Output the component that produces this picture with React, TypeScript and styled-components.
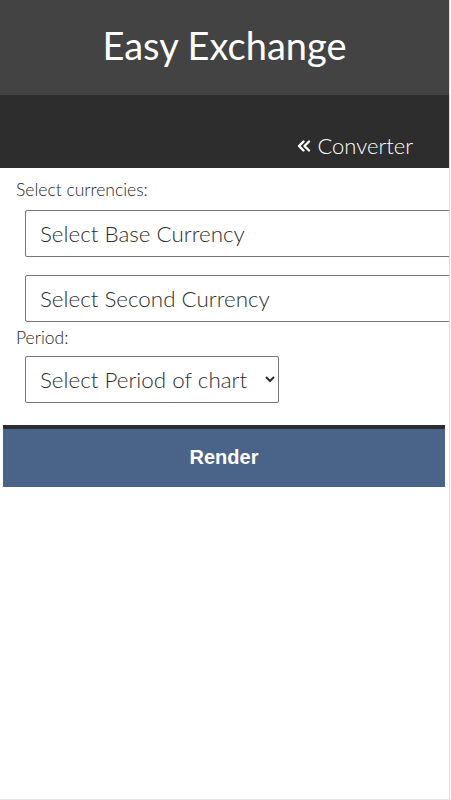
import React from "react";
import styled, { createGlobalStyle } from "styled-components";

const Global = createGlobalStyle`
  html, body { margin: 0; padding: 0; background: #fff; }
  body { overflow: hidden; font-family: "Lato", "Liberation Sans", sans-serif; }
`;

const Page = styled.div`
  width: 449px;
  height: 799px;
  border-right: 1px solid #dcdcdc;
  border-bottom: 1px solid #e4e4e4;
  overflow: hidden;
  display: flex;
  flex-direction: column;
`;

const Header = styled.header`
  height: 95px;
  background: #434343;
  display: flex;
  align-items: center;
  justify-content: center;
`;

const Title = styled.h1`
  margin: 0;
  color: #fff;
  font-family: "Lato", sans-serif;
  font-weight: 400;
  font-size: 38px;
  padding-bottom: 6px;
`;

const Nav = styled.nav`
  height: 73px;
  background: #2d2d2d;
  display: flex;
  align-items: flex-end;
  justify-content: flex-end;
  padding-right: 36px;
  padding-bottom: 9px;
  box-sizing: border-box;
`;

const NavLink = styled.a`
  color: #fff;
  font-family: "Lato", sans-serif;
  font-weight: 300;
  font-size: 22px;
  display: flex;
  align-items: center;
  gap: 6px;
  text-decoration: none;
`;

const Form = styled.form`
  display: flex;
  flex-direction: column;
  padding-top: 12px;
`;

const Label = styled.label`
  font-family: "Lato", sans-serif;
  font-weight: 300;
  color: #1e1e1e;
  font-size: 17.5px;
  margin-left: 16px;
  line-height: 20px;
`;

const Select = styled.select<{ $wide?: boolean }>`
  font-family: "Lato", sans-serif;
  font-weight: 300;
  font-size: 22.4px;
  color: #2e2e2e;
  background: #fff;
  border: 1px solid #767676;
  border-radius: 2px;
  height: 47px;
  padding: 0 8px 0 10px;
  margin-left: 25px;
  width: ${(p) => (p.$wide ? "460px" : "254px")};
  box-sizing: border-box;
`;

const Group = styled.div`
  display: flex;
  flex-direction: column;
  gap: 18px;
  margin-top: 10px;
  margin-bottom: 6px;
`;

const PeriodSelect = styled(Select)`
  margin-top: 8px;
`;

const RenderButton = styled.button`
  margin: 22px 0 0 3px;
  width: 442px;
  height: 62px;
  border: none;
  border-top: 4px solid #2d2d2d;
  background: #4a6388;
  color: #fff;
  font-family: "Liberation Sans", Arial, sans-serif;
  font-weight: 700;
  font-size: 20px;
  padding: 0 0 2px;
`;

export default function App() {
  return (
    <>
      <Global />
      <Page>
        <Header>
          <Title>Easy Exchange</Title>
        </Header>
        <Nav>
          <NavLink href="#">
            <svg width="14" height="14" viewBox="0 0 14 14" fill="none" stroke="#fff" strokeWidth="2.4" strokeLinecap="round" strokeLinejoin="round">
              <path d="M6.5 2.5 L2 7 L6.5 11.5" />
              <path d="M12 2.5 L7.5 7 L12 11.5" />
            </svg>
            Converter
          </NavLink>
        </Nav>
        <Form onSubmit={(e) => e.preventDefault()}>
          <Label>Select currencies:</Label>
          <Group>
            <Select $wide defaultValue="">
              <option value="">Select Base Currency</option>
            </Select>
            <Select $wide defaultValue="">
              <option value="">Select Second Currency</option>
            </Select>
          </Group>
          <Label>Period:</Label>
          <PeriodSelect defaultValue="">
            <option value="">Select Period of chart</option>
          </PeriodSelect>
          <RenderButton type="submit">Render</RenderButton>
        </Form>
      </Page>
    </>
  );
}
